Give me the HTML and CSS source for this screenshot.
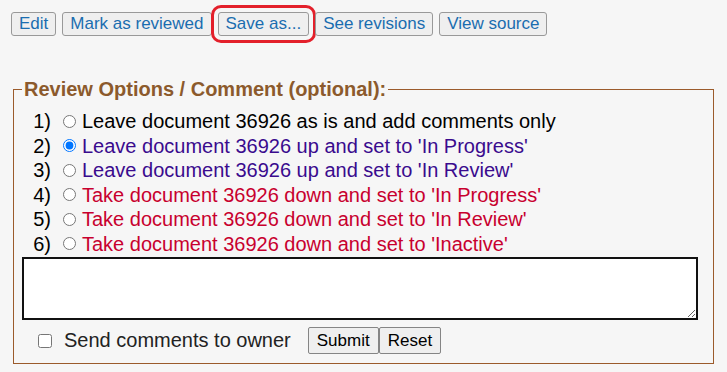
FILE: index.html
```html
<!DOCTYPE html>
<html lang="en">
<head>
  <meta charset="UTF-8" />
  <title>Review document</title>
  <link rel="stylesheet" href="styles.css">
</head>
<body>

  <div class="toolbar">
    <button class="tool">Edit</button>
    <button class="tool">Mark as reviewed</button>
    <button class="tool marked">Save as...</button>
    <button class="tool">See revisions</button>
    <button class="tool">View source</button>
  </div>

  <form class="review-form">
    <fieldset class="review">
      <legend>Review Options / Comment (optional):</legend>
      <ol class="options">
        <li class="keep"><span class="num">1)</span><input type="radio" name="action" id="a1"><label for="a1">Leave document 36926 as is and add comments only</label></li>
        <li class="up"><span class="num">2)</span><input type="radio" name="action" id="a2" checked><label for="a2">Leave document 36926 up and set to 'In Progress'</label></li>
        <li class="up"><span class="num">3)</span><input type="radio" name="action" id="a3"><label for="a3">Leave document 36926 up and set to 'In Review'</label></li>
        <li class="down"><span class="num">4)</span><input type="radio" name="action" id="a4"><label for="a4">Take document 36926 down and set to 'In Progress'</label></li>
        <li class="down"><span class="num">5)</span><input type="radio" name="action" id="a5"><label for="a5">Take document 36926 down and set to 'In Review'</label></li>
        <li class="down"><span class="num">6)</span><input type="radio" name="action" id="a6"><label for="a6">Take document 36926 down and set to 'Inactive'</label></li>
      </ol>
      <textarea class="comment"></textarea>
      <div class="send-row">
        <input type="checkbox" id="sendOwner">
        <label for="sendOwner" class="send-label">Send comments to owner</label>
        <div class="actions"><button type="submit">Submit</button><button type="reset">Reset</button></div>
      </div>
    </fieldset>
  </form>

</body>
</html>
```

FILE: styles.css
```css
* {
  box-sizing: border-box;
  font-family: 'Liberation Sans', Arial, sans-serif;
}

body {
  margin: 0;
  padding: 0;
  background-color: #f6f6f6;
  color: #000;
}

.toolbar {
  display: flex;
  gap: 6px;
  padding: 12px 0 0 11px;
}

.tool {
  height: 24px;
  padding: 0 7px;
  font-size: 17px;
  color: #1a6db0;
  background-color: #efefef;
  border: 1px solid #999;
  border-radius: 3px;
}

.tool.marked {
  outline: 3px solid #e3202b;
  outline-offset: 4px;
}

.review-form {
  padding: 0 13px 0 13px;
  margin-top: 42px;
}

.review {
  margin: 0;
  padding: 0 15px 9px 8px;
  border: 1px solid #9b5b2b;
}

.review legend {
  margin-left: 0;
  padding: 0 2px;
  font-size: 20px;
  font-weight: bold;
  color: #8c5a2c;
}

.options {
  list-style: none;
  margin: 8px 0 0;
  padding: 0;
  font-size: 20px;
  line-height: 24.5px;
}

.options li {
  display: flex;
  align-items: center;
}

.num {
  width: 29px;
  text-align: right;
}

.options input {
  margin: 0 6px 0 12px;
  width: 13px;
  height: 13px;
}

.keep label { color: #000; }
.up label { color: #3a0b8e; }
.down label { color: #c8002e; }

.comment {
  display: block;
  width: 100%;
  height: 63px;
  margin: 1px 0 0;
  border: 2px solid #111;
  background-color: #fff;
  resize: both;
}

.send-row {
  display: flex;
  align-items: center;
  margin-top: 7px;
  padding-left: 16px;
}

.send-row input {
  width: 14px;
  height: 14px;
  margin: 0 12px 0 0;
}

.send-label {
  font-size: 20px;
  color: #222;
}

.actions {
  display: flex;
  margin-left: 17px;
}

.actions button {
  height: 27px;
  padding: 0 8px;
  font-size: 17px;
  color: #000;
  background-color: #efefef;
  border: 1px solid #858585;
  border-radius: 2px;
}
```
